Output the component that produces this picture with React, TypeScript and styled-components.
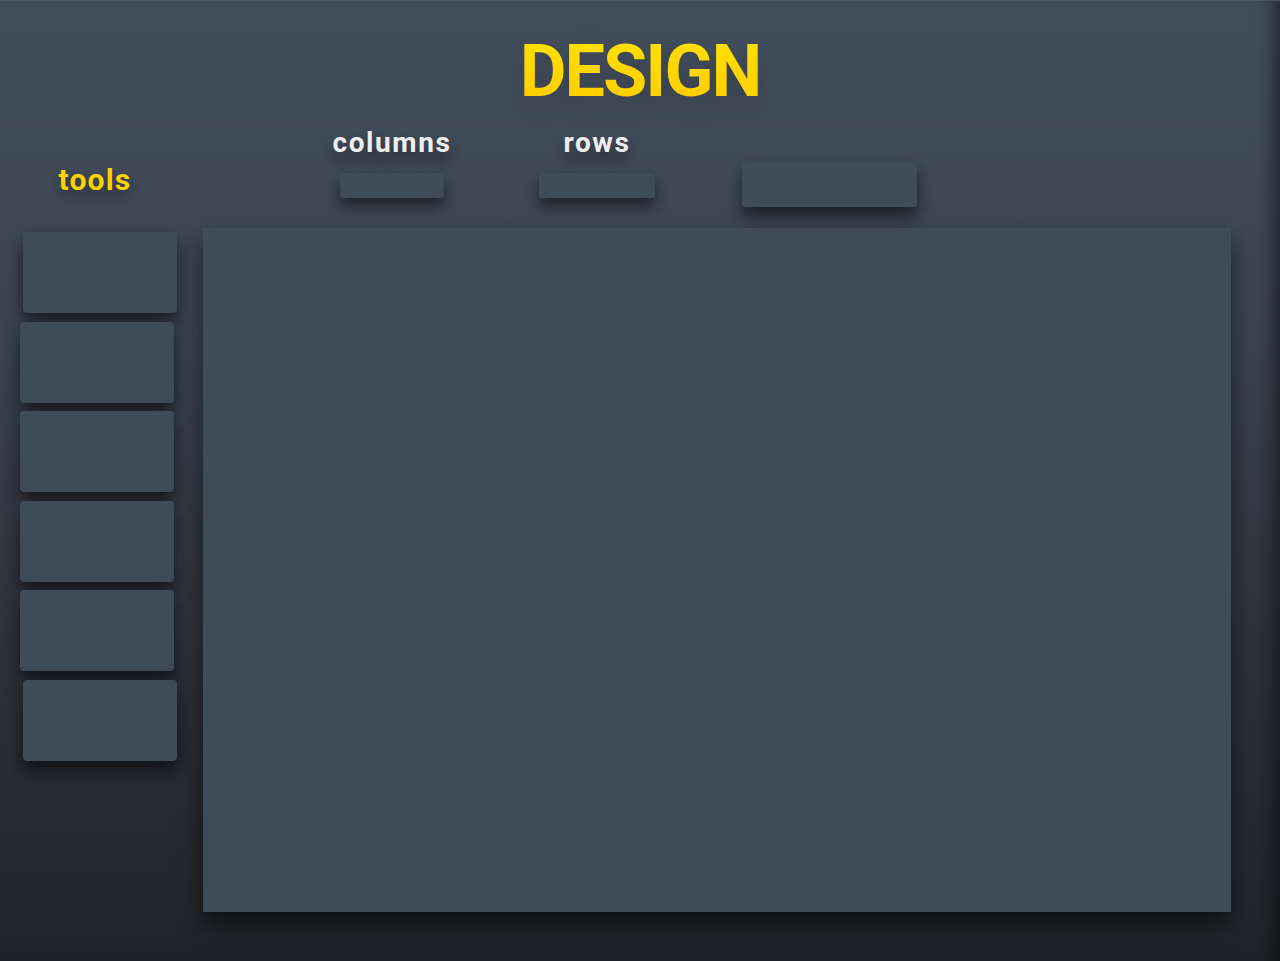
import styled, { createGlobalStyle } from "styled-components";

const GlobalStyle = createGlobalStyle`
  html, body {
    margin: 0;
    padding: 0;
    background: #23262b;
  }
  * {
    box-sizing: border-box;
  }
`;

const Page = styled.div`
  min-height: 961px;
  width: 100%;
  background: linear-gradient(180deg, #434e5c 0%, #3b4451 35%, #2c3139 70%, #212328 100%);
  box-shadow: inset 0 1px 0 #4b5664, inset -16px 0 18px -10px rgba(0, 0, 0, 0.5);
  font-family: Roboto, "Liberation Sans", sans-serif;
  overflow: hidden;
`;

const Header = styled.header`
  padding-top: 36px;
  text-align: center;
`;

const Title = styled.h1`
  margin: 0;
  font-size: 72px;
  line-height: 1;
  font-weight: 700;
  letter-spacing: -2px;
  color: #ffd500;
  background: linear-gradient(180deg, #ffe100 0%, #ffcc00 100%);
  -webkit-background-clip: text;
  background-clip: text;
  -webkit-text-fill-color: transparent;
  filter: drop-shadow(0 10px 12px rgba(0, 0, 0, 0.15));
`;

const Body = styled.div`
  display: flex;
  padding-left: 20px;
`;

const Sidebar = styled.aside`
  width: 183px;
  display: flex;
  flex-direction: column;
`;

const ToolsLabel = styled.h2`
  margin: 57px 0 37px;
  width: 150px;
  text-align: center;
  font-size: 30px;
  line-height: 1;
  font-weight: 700;
  letter-spacing: 1.2px;
  color: #ffd200;
  text-shadow: 0 8px 14px rgba(0, 0, 0, 0.3);
`;

const ToolList = styled.div`
  display: flex;
  flex-direction: column;
  gap: 8.5px;
`;

const ToolCard = styled.button<{ $shift?: boolean }>`
  width: 154px;
  height: 81px;
  margin-left: ${(p) => (p.$shift ? "3px" : "0")};
  border: none;
  border-radius: 4px;
  background: #404b58;
  box-shadow: 0 10px 18px rgba(0, 0, 0, 0.6);
  cursor: pointer;
`;

const Main = styled.main`
  flex: 1;
  display: flex;
  flex-direction: column;
`;

const Controls = styled.div`
  display: flex;
  align-items: flex-end;
  gap: 87px;
  padding-left: 129px;
  margin-top: 21px;
`;

const Group = styled.label<{ $width: number }>`
  width: ${(p) => p.$width}px;
  display: flex;
  flex-direction: column;
  align-items: center;
  padding-bottom: 9px;
`;

const GroupLabel = styled.span`
  font-size: 28px;
  line-height: 1;
  font-weight: 700;
  letter-spacing: 1.6px;
  color: #eeeeee;
  text-shadow: 0 10px 14px rgba(0, 0, 0, 0.45);
  margin-bottom: 16px;
  white-space: nowrap;
`;

const NumberInput = styled.input<{ $width: number }>`
  width: ${(p) => p.$width}px;
  height: 25px;
  border: none;
  border-radius: 3px;
  background: #404b58;
  box-shadow: 0 8px 14px rgba(0, 0, 0, 0.55);
  outline: none;
  color: #eee;
`;

const ActionBox = styled.button`
  width: 175px;
  height: 46px;
  border: none;
  border-radius: 4px;
  background: #404b58;
  box-shadow: 0 10px 16px rgba(0, 0, 0, 0.55);
  cursor: pointer;
`;

const Canvas = styled.div`
  margin-top: 21px;
  width: 1028px;
  height: 684px;
  background: #404b58;
  box-shadow: 0 12px 22px rgba(0, 0, 0, 0.55);
`;

const tools = [true, false, false, false, false, true];

export default function App() {
  return (
    <>
      <GlobalStyle />
      <Page>
        <Header>
          <Title>DESIGN</Title>
        </Header>
        <Body>
          <Sidebar>
            <ToolsLabel>tools</ToolsLabel>
            <ToolList>
              {tools.map((shift, i) => (
                <ToolCard key={i} $shift={shift} />
              ))}
            </ToolList>
          </Sidebar>
          <Main>
            <Controls>
              <Group $width={120}>
                <GroupLabel>columns</GroupLabel>
                <NumberInput type="text" $width={104} />
              </Group>
              <Group $width={116}>
                <GroupLabel>rows</GroupLabel>
                <NumberInput type="text" $width={116} />
              </Group>
              <ActionBox />
            </Controls>
            <Canvas />
          </Main>
        </Body>
      </Page>
    </>
  );
}
